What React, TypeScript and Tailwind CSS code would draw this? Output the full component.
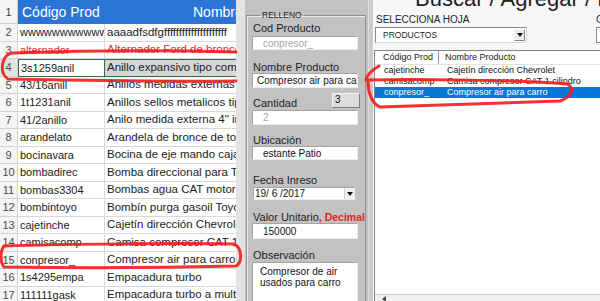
import React from "react";

const sheetRows: [string, string, string][] = [
  ["2", "wwwwwwwwwww", "aaaadfsdfgfffffffffffffffffffff"],
  ["3", "alternador", "Alternador Ford de bronce"],
  ["4", "3s1259anil", "Anillo expansivo tipo compresor"],
  ["5", "43/16anill", "Anillos medidas externas"],
  ["6", "1t1231anil", "Anillos sellos metalicos tipo"],
  ["7", "41/2anillo", "Anilo medida externa 4\" interna"],
  ["8", "arandelato", "Arandela de bronce de tope"],
  ["9", "bocinavara", "Bocina de eje mando caja"],
  ["10", "bombadirec", "Bomba direccional para Toyota"],
  ["11", "bombas3304", "Bombas agua CAT motor 3304"],
  ["12", "bombintoyo", "Bombín purga gasoil Toyota"],
  ["13", "cajetinche", "Cajetín dirección Chevrolet"],
  ["14", "camisacomp", "Camisa compresor CAT 1 cilindro"],
  ["15", "conpresor_", "Compresor air para carro"],
  ["16", "1s4295empa", "Empacadura turbo"],
  ["17", "111111gask", "Empacadura turbo a multiple"],
];

const listRows = [
  { code: "cajetinche", name: "Cajetín dirección Chevrolet" },
  { code: "camisacomp", name: "Camisa compresor CAT 1 cilindro" },
  { code: "conpresor_", name: "Compresor air para carro", selected: true },
];

function Sheet() {
  return (
    <div className="w-[236px] shrink-0 overflow-hidden bg-white font-['Liberation_Sans',Arial,sans-serif] text-[#1b1b1b]">
      {/* fila 1: encabezados */}
      <div className="flex h-[24px]">
        <div className="flex w-[18px] shrink-0 items-end justify-center border-r border-b border-[#cfcfcf] bg-[#f5f5f5] pb-[3px] text-[11px] text-[#444]">
          1
        </div>
        <div className="flex flex-1 items-center whitespace-nowrap bg-[#2c74d6] text-[14px] text-white">
          <div className="w-[87px] shrink-0 pl-[4px]">Código Prod</div>
          <div className="pl-[88px]">Nombre Producto</div>
        </div>
      </div>
      {sheetRows.map(([n, code, name]) => {
        const red = n === "3";
        const sel = n === "4";
        return (
          <div key={n} className="flex h-[17.5px]">
            <div
              className={
                "flex w-[18px] shrink-0 items-center justify-center border-r border-b border-[#d4d4d4] text-[11px] text-[#4a4a4a] " +
                (sel ? "bg-[#e2e2e2]" : "bg-[#f5f5f5]")
              }
            >
              {n}
            </div>
            <div
              className={
                "flex w-[87px] shrink-0 items-center overflow-hidden whitespace-nowrap pl-[2px] text-[11px] " +
                (sel
                  ? "border border-[#2e6b45] bg-white"
                  : "border-r border-b border-[#d9d9d9]") +
                (red ? " text-[#e0302b]" : "")
              }
            >
              {code}
            </div>
            <div
              className={
                "flex flex-1 items-center overflow-hidden whitespace-nowrap pl-[2px] text-[11.5px] " +
                (sel
                  ? "border-y border-[#2e6b45] bg-[#d6d6d6]"
                  : "border-b border-[#d9d9d9]") +
                (red ? " text-[#e0302b]" : "")
              }
            >
              {name}
            </div>
          </div>
        );
      })}
    </div>
  );
}

const boxCls =
  "flex items-center overflow-hidden whitespace-nowrap bg-white border border-[#a3a3a3] border-r-[#ececec] border-b-[#ececec] text-[10px]";

function Label({ children, className = "" }: { children: React.ReactNode; className?: string }) {
  return (
    <div className={"h-[12px] whitespace-nowrap pl-[1px] text-[11px] leading-[12px] text-[#1e1e1e] " + className}>
      {children}
    </div>
  );
}

function FormPanel() {
  return (
    <div className="flex w-[137px] shrink-0 overflow-hidden bg-[#c2c2c2] font-['Liberation_Sans',Arial,sans-serif]">
      <div className="w-[9px] shrink-0 bg-[#e3e3e3]" />
      <div className="pl-[1px] pt-[10px]">
        <fieldset className="h-[320px] w-[119px] overflow-hidden border border-[#8e8e8e] pl-[5px] shadow-[inset_1px_1px_0_#efefef]">
          <legend className="ml-[8px] px-[2px] text-[8.5px] leading-[11px] text-[#222]">RELLENO</legend>
          <Label className="mt-[1px]">Cod Producto</Label>
          <div className={boxCls + " mt-[2px] h-[14px] w-[106px] pl-[10px] text-[#a5a5a5]"}>conpresor_</div>

          <Label className="mt-[11px]">Nombre Producto</Label>
          <div className={boxCls + " h-[15px] w-[106px] pl-[4px] text-[9.75px] text-[#111]"}>Compresor air para carro</div>

          <div className="flex h-[21px] w-[108px] justify-between">
            <Label className="self-end">Cantidad</Label>
            <div className="mt-[5px] h-[15px] w-[28px] border border-[#f2f2f2] border-r-[#7d7d7d] border-b-[#7d7d7d] bg-[#dcdcdc] pl-[2px] text-[10px] leading-[11px] text-[#111]">
              3
            </div>
          </div>
          <div className={boxCls + " mt-[1px] h-[15px] w-[106px] pl-[10px] text-[#a5a5a5]"}>2</div>

          <Label className="mt-[9px]">Ubicación</Label>
          <div className={boxCls + " h-[14px] w-[106px] pl-[10px] text-[#111]"}>estante Patio</div>

          <Label className="mt-[14px]">Fecha Inreso</Label>
          <div className={boxCls + " ml-[1px] mt-[1px] h-[13px] w-[102px] pl-[1px] text-[#111]"}>
            <span className="flex-1">19/ 6 /2017</span>
            <span className="flex h-full w-[10px] items-center justify-center border-l border-[#d0d0d0] bg-[#f2f2f2]">
              <svg width="6" height="4" viewBox="0 0 6 4">
                <path d="M0 0h6L3 4z" fill="#111" />
              </svg>
            </span>
          </div>

          <Label className="mt-[11px]">
            Valor Unitario<span className="text-[10.5px] font-bold text-[#e02424]">, Decimal</span>
          </Label>
          <div className={boxCls + " h-[16px] w-[106px] pl-[10px] text-[#111]"}>150000</div>

          <Label className="mt-[10px]">Observación</Label>
          <div className="mt-[1px] h-[50px] w-[106px] border border-[#a3a3a3] border-r-[#ececec] bg-white pl-[7px] pt-[3px] text-[10px] leading-[11px] text-[#111]">
            <div>Compresor de air</div>
            <div>usados para carro</div>
          </div>
        </fieldset>
      </div>
      <div className="ml-[2px] w-[1px] shrink-0 bg-[#dedede]" />
      <div className="flex-1 bg-[#cbcbcb]" />
    </div>
  );
}

function SearchPanel() {
  return (
    <div className="flex min-w-0 flex-1 flex-col overflow-hidden bg-[#f7f7f7] font-['Liberation_Sans',Arial,sans-serif] text-[#1e1e1e]">
      <div className="h-[13px] shrink-0 overflow-hidden">
        <div className="-mt-[13px] whitespace-nowrap pl-[42px] text-[22px] leading-[24px] text-[#222]">
          Buscar / Agregar / Eliminar
        </div>
      </div>
      <div className="mt-[1px] flex h-[12px] shrink-0 whitespace-nowrap text-[10px] leading-[12px]">
        <div className="w-[223px] shrink-0 pl-[3px]">SELECCIONA HOJA</div>
        <div className="shrink-0">COLUMNA</div>
      </div>
      <div className="mt-[1px] flex h-[16px] shrink-0">
        <div className="ml-[2px] flex w-[152px] shrink-0 items-center border border-[#8a8a8a] border-r-[#d8d8d8] border-b-[#d8d8d8] bg-white">
          <span className="flex-1 pl-[7px] text-[8.5px]">PRODUCTOS</span>
          <span className="mr-[1px] flex h-[12px] w-[11px] items-center justify-center border border-[#f4f4f4] border-r-[#8a8a8a] border-b-[#8a8a8a] bg-[#ececec]">
            <svg width="6" height="4" viewBox="0 0 6 4">
              <path d="M0 0h6L3 4z" fill="#111" />
            </svg>
          </span>
        </div>
        <div className="ml-[69px] w-[40px] shrink-0 border border-[#8a8a8a] bg-white" />
      </div>
      <div className="ml-[1px] mt-[7px] flex flex-1 flex-col border-t border-l border-[#828282] bg-white text-[9px] leading-[11px]">
        <div className="flex h-[14px] shrink-0 items-center whitespace-nowrap border-b border-[#e2e2e2] text-[#222]">
          <div className="flex h-full w-[64px] items-center border-r border-[#9a9a9a] pl-[8px]">Código Prod</div>
          <div className="pl-[6px]">Nombre Producto</div>
        </div>
        {listRows.map((r) => (
          <div
            key={r.code}
            className={
              "flex h-[11px] shrink-0 items-center whitespace-nowrap " +
              (r.selected ? "bg-[#0a77d5] text-white" : "text-[#111]")
            }
          >
            <div className="w-[64px] pl-[9px]">{r.code}</div>
            <div className="pl-[8px]">{r.name}</div>
          </div>
        ))}
        <div className="flex-1" />
        <div className="flex h-[7px] shrink-0 items-start border-t border-[#cfcfcf] bg-[#f0f0f0] pl-[7px] pt-[1px]">
          <svg width="4" height="6" viewBox="0 0 4 6">
            <path d="M4 0v6L0 3z" fill="#444" />
          </svg>
        </div>
      </div>
    </div>
  );
}

export default function App() {
  return (
    <div className="relative flex h-[301px] w-[600px] overflow-hidden bg-white">
      <Sheet />
      <FormPanel />
      <SearchPanel />
      {/* marcas a mano en rojo */}
      <svg className="pointer-events-none absolute inset-0" width="600" height="301" viewBox="0 0 600 301">
        <g fill="none" stroke="#f21d1d" strokeWidth="3" strokeLinecap="round" strokeLinejoin="round" opacity="0.9">
          <path d="M236 52 C160 50 70 51 12 53 C1 55 -1 74 8 79 C70 80 160 82 236 81" />
          <path d="M4 246 C60 244 180 243 233 244 C242 246 243 262 236 266 C160 268 60 268 4 267 C0 262 0 251 4 246" />
          <path d="M379 66 C372 70 367 75 366 80 C420 79 520 80 567 84 C575 88 572 97 560 101 C500 103 420 106 380 107 C372 104 368 92 368 82" />
        </g>
      </svg>
    </div>
  );
}
